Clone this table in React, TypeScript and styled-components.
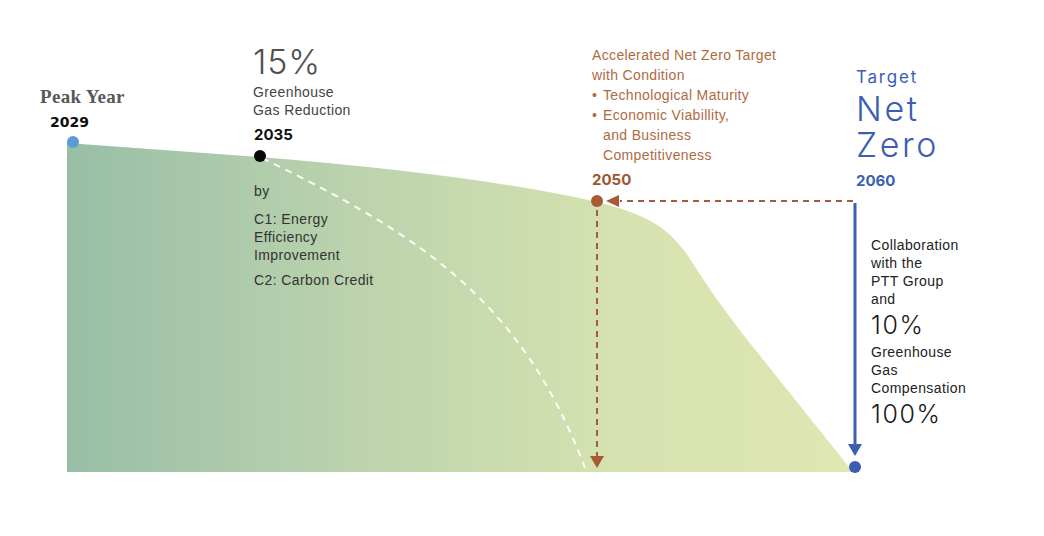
import styled, { createGlobalStyle } from 'styled-components';

const GlobalStyle = createGlobalStyle`
  html, body {
    margin: 0;
    padding: 0;
    background: #ffffff;
  }
`;

const BROWN = '#a65b32';
const BROWN_TEXT = '#b06a42';
const BLUE = '#3c5db2';

export default function App() {
  return (
    <>
      <GlobalStyle />
      <Stage>
        <Chart width={1044} height={536} viewBox="0 0 1044 536">
          <defs>
            <linearGradient id="area" x1="67" y1="0" x2="853" y2="0" gradientUnits="userSpaceOnUse">
              <stop offset="0" stopColor="#98bea6" />
              <stop offset="0.35" stopColor="#bad2ad" />
              <stop offset="0.7" stopColor="#d6e2b0" />
              <stop offset="1" stopColor="#dfe7b2" />
            </linearGradient>
          </defs>
          <path
            d="M67,143 L260,157 Q480,175 597,202 C650,215 672,230 692,262 C712,294 737,327 757,352 L853,472 L67,472 Z"
            fill="url(#area)"
          />
          {/* scenario curve from 2035 */}
          <path
            d="M262,158 C420,235 522,300 585,468"
            fill="none"
            stroke="#ffffff"
            strokeWidth={2}
            strokeDasharray="7 6"
            opacity={0.95}
          />
          {/* accelerated net zero arrows */}
          <line x1={853} y1={201} x2={620} y2={201} stroke={BROWN} strokeWidth={2} strokeDasharray="6 5" />
          <polygon points="606,201 619,195 619,207" fill={BROWN} />
          <line x1={597} y1={210} x2={597} y2={456} stroke={BROWN} strokeWidth={2} strokeDasharray="6 5" />
          <polygon points="590,456 604,456 597,468" fill={BROWN} />
          <circle cx={597} cy={201} r={6} fill={BROWN} />
          {/* net zero arrow */}
          <line x1={855} y1={203} x2={855} y2={446} stroke={BLUE} strokeWidth={3} />
          <polygon points="848,444 862,444 855,456" fill={BLUE} />
          <circle cx={855} cy={467} r={6} fill={BLUE} />
          {/* milestones */}
          <circle cx={73} cy={142} r={6} fill="#5e9bd6" />
          <circle cx={260} cy={156} r={6} fill="#0a0a0a" />
        </Chart>

        <Label $x={40} $y={87}>
          <PeakTitle>Peak Year</PeakTitle>
        </Label>
        <Label $x={50} $y={114}>
          <PeakYear>2029</PeakYear>
        </Label>

        <Label $x={253} $y={45}>
          <BigFigure $size={34} $color="#505050" $spacing={0.8}>
            15%
          </BigFigure>
          <Body $color="#444444" $gap={4}>
            Greenhouse
            <br />
            Gas Reduction
          </Body>
        </Label>
        <Label $x={254} $y={127}>
          <Year $color="#111111">2035</Year>
        </Label>
        <Label $x={254} $y={182}>
          <Body>by</Body>
          <Body $gap={9.5}>
            C1: Energy
            <br />
            Efficiency
            <br />
            Improvement
          </Body>
          <Body $gap={7.5}>C2: Carbon Credit</Body>
        </Label>

        <Label $x={592} $y={44.5}>
          <BrownBody>
            Accelerated Net Zero Target
            <br />
            with Condition
          </BrownBody>
          <Bullets>
            <li>Technological Maturity</li>
            <li>
              Economic Viabillity,
              <br />
              and Business
              <br />
              Competitiveness
            </li>
          </Bullets>
        </Label>
        <Label $x={592} $y={172}>
          <Year $color="#9d5530">2050</Year>
        </Label>

        <Label $x={856} $y={69}>
          <TargetCaption>Target</TargetCaption>
          <NetZero>
            <div>Net</div>
            <div>Zero</div>
          </NetZero>
        </Label>
        <Label $x={856} $y={173}>
          <Year $color={BLUE}>2060</Year>
        </Label>

        <Label $x={871} $y={235.5}>
          <Body $color="#222222">
            Collaboration
            <br />
            with the
            <br />
            PTT Group
            <br />
            and
          </Body>
          <BigFigure $size={25} $color="#1a1a1a" $gap={5} $spacing={1.6}>
            10%
          </BigFigure>
          <Body $color="#222222" $gap={5}>
            Greenhouse
            <br />
            Gas
            <br />
            Compensation
          </Body>
          <BigFigure $size={25} $color="#1a1a1a" $gap={5.5} $spacing={1.6}>
            100%
          </BigFigure>
        </Label>
      </Stage>
    </>
  );
}

const Stage = styled.div`
  position: relative;
  width: 1044px;
  height: 536px;
  background: #ffffff;
  overflow: hidden;
`;

const Chart = styled.svg`
  position: absolute;
  inset: 0;
  display: block;
`;

const Label = styled.div<{ $x: number; $y: number }>`
  position: absolute;
  left: ${props => props.$x}px;
  top: ${props => props.$y}px;
  display: flex;
  flex-direction: column;
  white-space: nowrap;
`;

const PeakTitle = styled.div`
  font-family: 'Liberation Serif', 'Times New Roman', serif;
  font-weight: 700;
  font-size: 19px;
  line-height: 19px;
  letter-spacing: 0.3px;
  color: #595959;
`;

const PeakYear = styled.div`
  font-family: 'DejaVu Sans', Verdana, sans-serif;
  font-weight: 700;
  font-size: 14px;
  line-height: 16px;
  color: #0d0d0d;
`;

const Year = styled.div<{ $color: string }>`
  font-family: Inter, 'Liberation Sans', sans-serif;
  font-weight: 700;
  font-size: 15px;
  line-height: 15px;
  color: ${props => props.$color};
`;

const BigFigure = styled.div<{ $size: number; $color: string; $gap?: number; $spacing: number }>`
  font-family: Inter, 'Liberation Sans', sans-serif;
  font-weight: 300;
  font-size: ${props => props.$size}px;
  line-height: ${props => props.$size}px;
  letter-spacing: ${props => props.$spacing}px;
  color: ${props => props.$color};
  margin-top: ${props => props.$gap ?? 0}px;
`;

const Body = styled.div<{ $color?: string; $gap?: number }>`
  font-family: 'Liberation Sans', Arial, sans-serif;
  font-size: 14px;
  line-height: 18px;
  letter-spacing: 0.4px;
  color: ${props => props.$color ?? '#333333'};
  margin-top: ${props => props.$gap ?? 0}px;
`;

const BrownBody = styled.div`
  font-family: 'Liberation Sans', Arial, sans-serif;
  font-size: 14px;
  line-height: 20px;
  letter-spacing: 0.35px;
  color: ${BROWN_TEXT};
`;

const Bullets = styled.ul`
  margin: 0;
  padding: 0 0 0 11px;
  list-style: none;
  font-family: 'Liberation Sans', Arial, sans-serif;
  font-size: 14px;
  line-height: 20px;
  letter-spacing: 0.35px;
  color: ${BROWN_TEXT};

  li {
    position: relative;
  }

  li::before {
    content: '•';
    position: absolute;
    left: -11px;
    top: 0;
  }
`;

const TargetCaption = styled.div`
  font-family: Inter, 'Liberation Sans', sans-serif;
  font-weight: 400;
  font-size: 17px;
  line-height: 17px;
  letter-spacing: 1.8px;
  color: ${BLUE};
`;

const NetZero = styled.div`
  margin-top: 4.5px;
  font-family: Inter, 'Liberation Sans', sans-serif;
  font-weight: 300;
  font-size: 34px;
  line-height: 36px;
  letter-spacing: 2.6px;
  color: ${BLUE};
`;
